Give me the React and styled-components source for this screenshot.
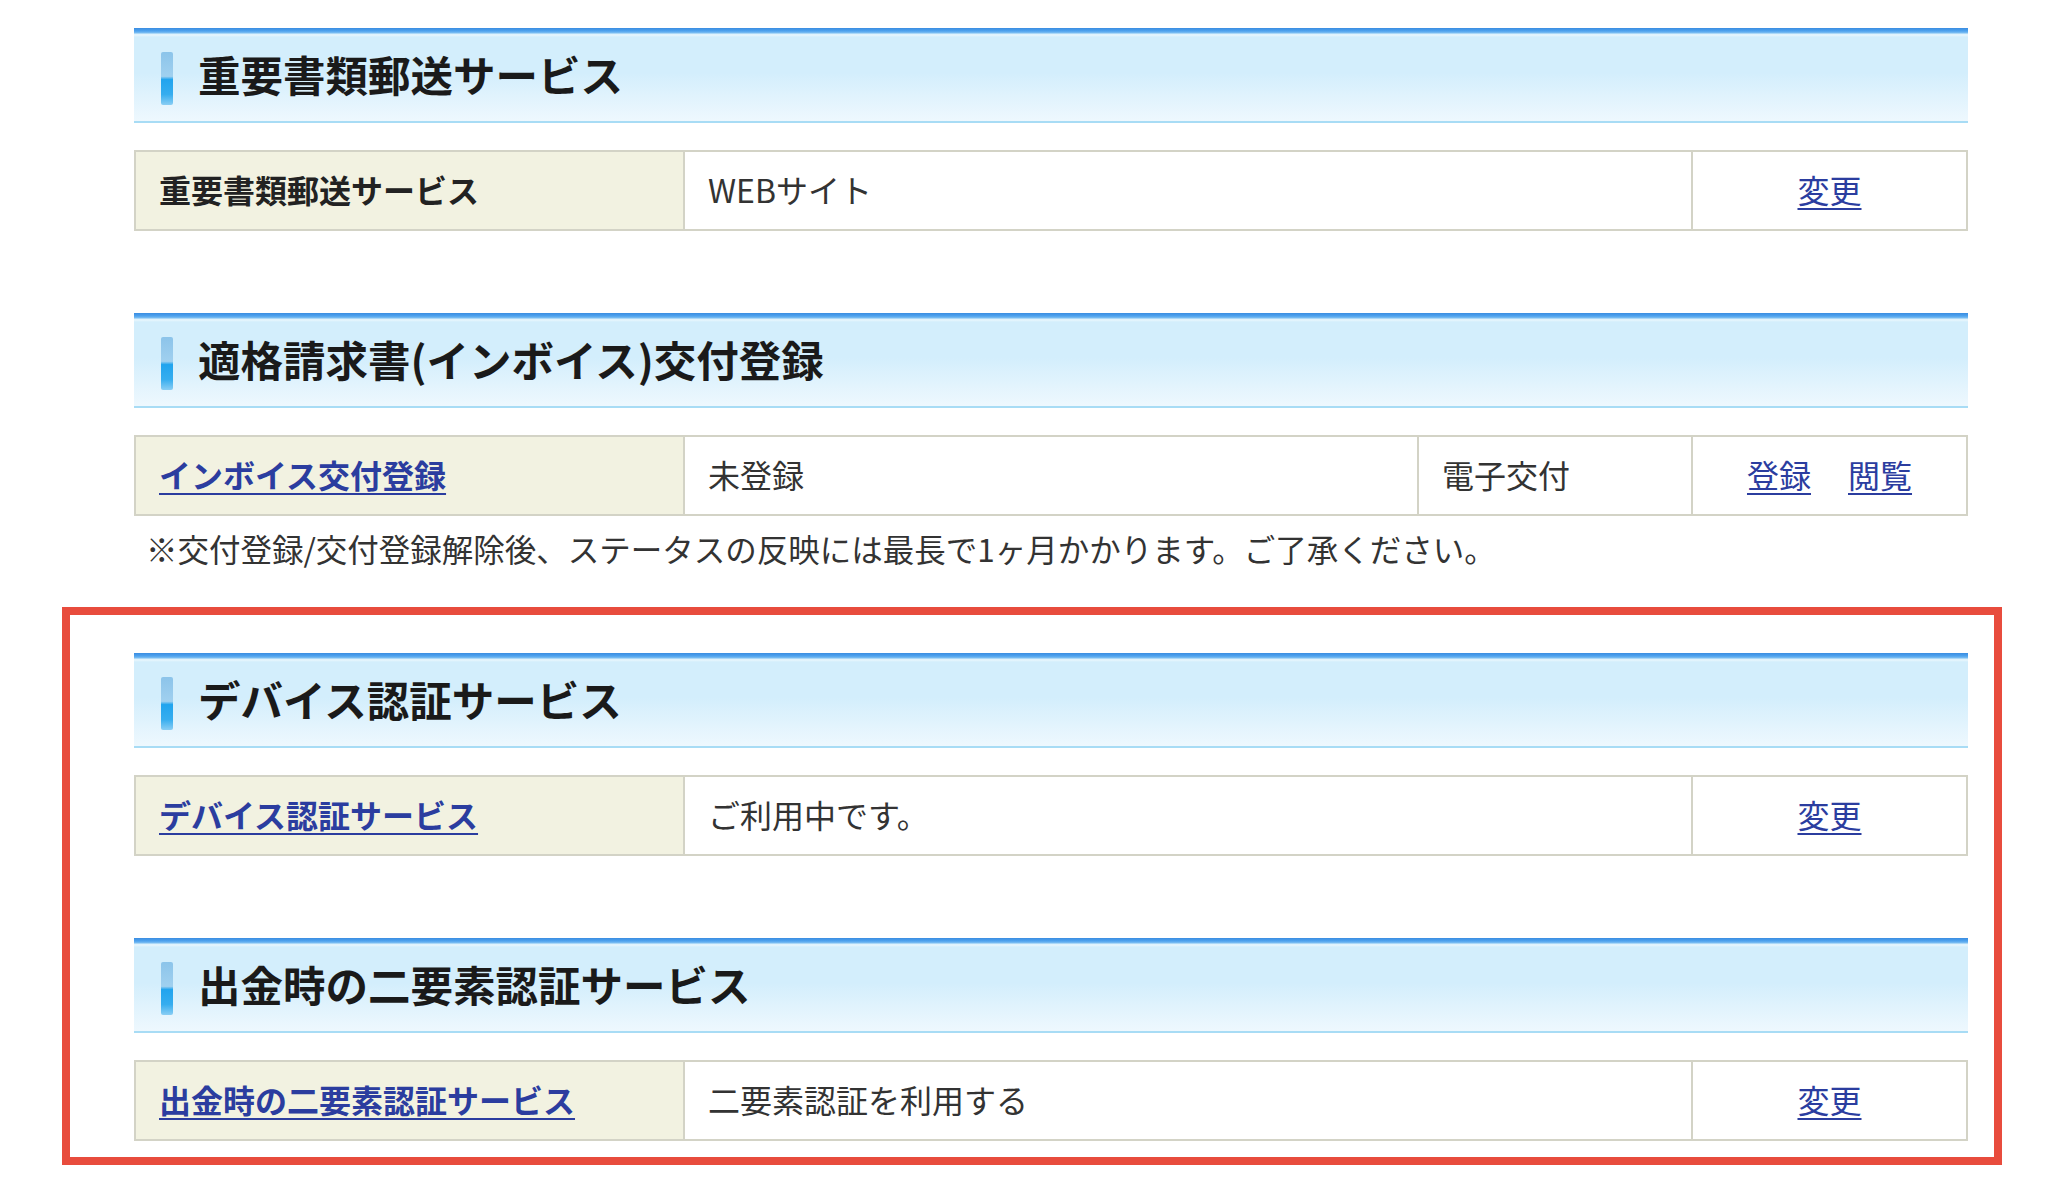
import styled, { createGlobalStyle } from 'styled-components';

const GlobalStyle = createGlobalStyle`
  body {
    margin: 0;
    background: #fff;
    font-family: "Noto Sans CJK JP", "Noto Sans", sans-serif;
    color: #333;
  }
`;

const Page = styled.div`
  width: 1940px;
  margin-left: 62px;
  padding-top: 28px;
  display: flex;
  flex-direction: column;
`;

const Section = styled.section`
  display: flex;
  flex-direction: column;
  margin: 0 34px 0 72px;

  & + & {
    margin-top: 82px;
  }
`;

// 赤枠（注目箇所）
const Highlight = styled.div`
  margin-top: 39px;
  border: 8px solid #e84c3d;
  padding: 38px 26px 16px 64px;

  ${Section} {
    margin-left: 0;
    margin-right: 0;
  }
`;

const SectionHeader = styled.h2`
  margin: 0 0 27px;
  height: 95px;
  box-sizing: border-box;
  padding: 7px 0 0 27px;
  display: flex;
  align-items: center;
  gap: 25px;
  background: linear-gradient(
    to bottom,
    #3a8de1 0,
    #4ea2ee 3px,
    #7dbff2 5px,
    #d9f0fc 6px,
    #e8f6fd 7px,
    #d3eefc 9px,
    #d3eefc 48%,
    #eef8fe 100%
  );
  border-bottom: 2px solid #a8dcf5;
  font-size: 42.5px;
  font-weight: 700;
  color: #1a1a1a;
  line-height: 1;
`;

const HeaderTitle = styled.span`
  margin-bottom: 8px;
`;

const HeaderBar = styled.span`
  flex: none;
  width: 12px;
  height: 53px;
  border-radius: 2px;
  background: linear-gradient(
    to bottom,
    #8cc4ea 0%,
    #a0d0ef 46%,
    #21a4ee 52%,
    #36adef 80%,
    #8acef4 100%
  );
`;

const Row = styled.div`
  display: grid;
  grid-template-columns: ${(p) => p.$cols};
  height: 81px;
  box-sizing: border-box;
  border: 2px solid #d3d3c6;
  font-size: 32px;
  line-height: 1.2;
`;

const LabelCell = styled.div`
  display: flex;
  align-items: center;
  padding: 0 23px 3px;
  background: #f2f2e1;
  font-weight: 700;
  color: #222;
`;

const Cell = styled.div`
  display: flex;
  align-items: center;
  justify-content: ${(p) => (p.$center ? 'center' : 'flex-start')};
  gap: 37px;
  padding: 0 23px 3px;
  border-left: 2px solid #d3d3c6;
  color: #333;
`;

const Link = styled.a`
  color: #2b3d9f;
  text-decoration: underline;
  text-decoration-thickness: 2px;
  text-underline-offset: 5px;
  cursor: pointer;
`;

const Note = styled.p`
  margin: 12px 0 0;
  padding-left: 12px;
  font-size: 31.5px;
  line-height: 40px;
  color: #333;
`;

const COLS3 = '547px 1fr 275px';
const COLS4 = '547px 1fr 274px 275px';

function Block({ title, children }) {
  return (
    <Section>
      <SectionHeader>
        <HeaderBar />
        <HeaderTitle>{title}</HeaderTitle>
      </SectionHeader>
      {children}
    </Section>
  );
}

export default function App() {
  return (
    <>
      <GlobalStyle />
      <Page>
        <Block title="重要書類郵送サービス">
          <Row $cols={COLS3}>
            <LabelCell>重要書類郵送サービス</LabelCell>
            <Cell>WEBサイト</Cell>
            <Cell $center>
              <Link>変更</Link>
            </Cell>
          </Row>
        </Block>

        <Block title="適格請求書(インボイス)交付登録">
          <Row $cols={COLS4}>
            <LabelCell>
              <Link>インボイス交付登録</Link>
            </LabelCell>
            <Cell>未登録</Cell>
            <Cell>電子交付</Cell>
            <Cell $center>
              <Link>登録</Link>
              <Link>閲覧</Link>
            </Cell>
          </Row>
          <Note>※交付登録/交付登録解除後、ステータスの反映には最長で1ヶ月かかります。ご了承ください。</Note>
        </Block>

        <Highlight>
          <Block title="デバイス認証サービス">
            <Row $cols={COLS3}>
              <LabelCell>
                <Link>デバイス認証サービス</Link>
              </LabelCell>
              <Cell>ご利用中です。</Cell>
              <Cell $center>
                <Link>変更</Link>
              </Cell>
            </Row>
          </Block>

          <Block title="出金時の二要素認証サービス">
            <Row $cols={COLS3}>
              <LabelCell>
                <Link>出金時の二要素認証サービス</Link>
              </LabelCell>
              <Cell>二要素認証を利用する</Cell>
              <Cell $center>
                <Link>変更</Link>
              </Cell>
            </Row>
          </Block>
        </Highlight>
      </Page>
    </>
  );
}
